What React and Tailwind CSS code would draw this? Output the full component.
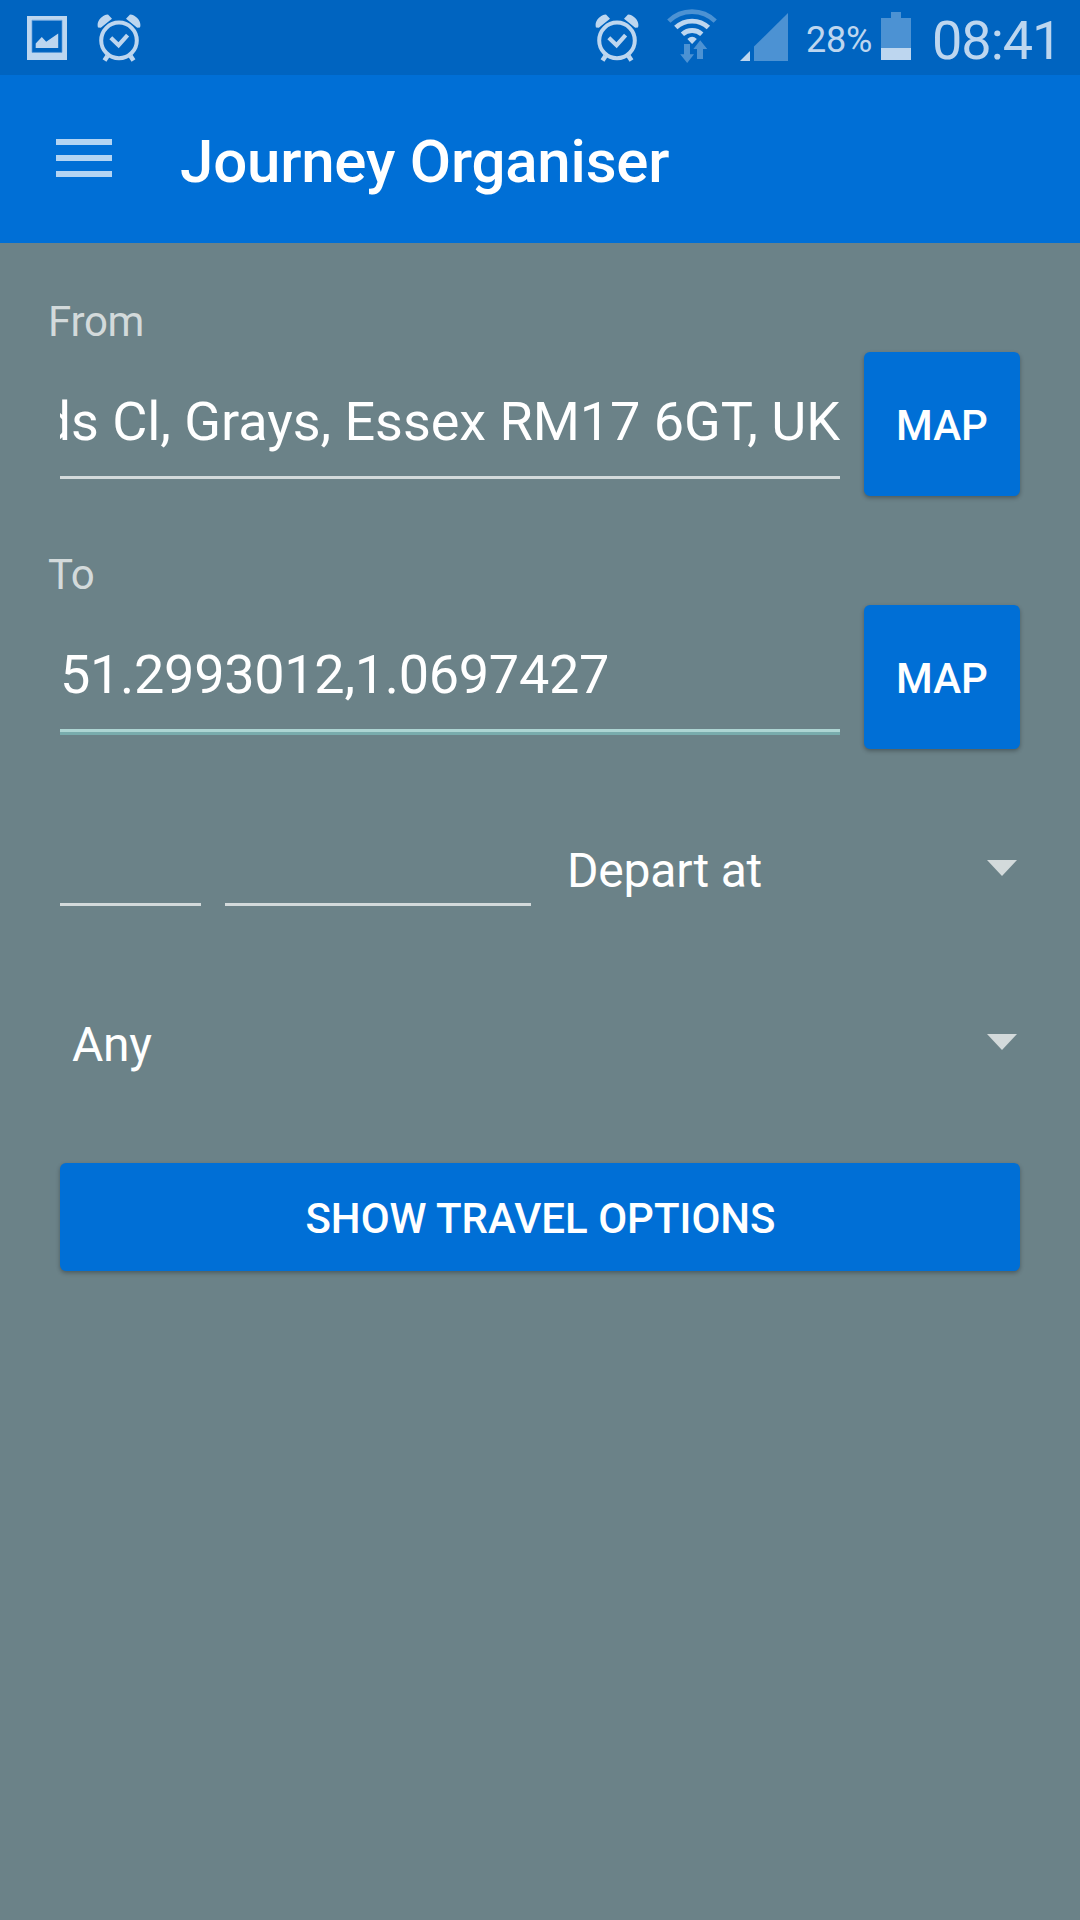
import React from "react";

function AlarmIcon() {
  return (
    <svg width="44" height="48" viewBox="0 0 44 48" fill="none" stroke="#bdd6ef">
      <circle cx="22" cy="26.4" r="17.8" strokeWidth="4" />
      <path d="M13.8 23.8l7.8 7.4 9-10" strokeWidth="4.2" />
      <path d="M10.5 42l-3 4.6M33.5 42l3 4.6" strokeWidth="4.6" />
      <path
        d="M1 13.6C-1 7.8 4.6 1 11 0.6L15 4.8 3.8 13.8ZM43 13.6C45 7.8 39.4 1 33 0.6L29 4.8 40.2 13.8Z"
        fill="#bdd6ef"
        stroke="none"
      />
    </svg>
  );
}

function PictureIcon() {
  return (
    <svg width="40" height="44" viewBox="0 0 40 44">
      <path fillRule="evenodd" d="M0 0h40v44H0zM5 4.5v32h30v-32z" fill="#bdd6ef" />
      <path d="M5 4.2h30v32.2H5z" fill="none" stroke="#5b9cdc" strokeWidth="0.7" />
      <path d="M8.7 32V27.5L14.8 21l4.4 4.7L31.2 17.6V32z" fill="#bdd6ef" />
    </svg>
  );
}

function WifiIcon() {
  return (
    <svg width="50" height="54" viewBox="0 0 50 54" fill="none">
      <path d="M1.8 12.2a33 33 0 0 1 46.4 0" stroke="#4c92d3" strokeWidth="4.6" />
      <path d="M8.8 18.6a23.5 23.5 0 0 1 32.6 0" stroke="#bdd6ef" strokeWidth="4.8" />
      <path d="M15.4 25.2a14.5 14.5 0 0 1 19.4 0" stroke="#bdd6ef" strokeWidth="4.8" />
      <path d="M20.4 30q4.7-4.4 9.4 0l-4.7 5z" fill="#bdd6ef" />
      <path d="M17 35h6v10.2h4L20.2 54 13.2 45.2H17z" fill="#4c92d3" />
      <path d="M30 50h6V40h4.2L33.2 31.2 26.4 40H30z" fill="#4c92d3" />
    </svg>
  );
}

function SignalIcon() {
  return (
    <svg width="48" height="48" viewBox="0 0 48 48">
      <path d="M0 48L10 38v10z" fill="#bdd6ef" />
      <path d="M14 48V33.6L48 0v48z" fill="#4c92d3" />
    </svg>
  );
}

function BatteryIcon() {
  return (
    <svg width="30" height="48" viewBox="0 0 30 48">
      <path d="M10 0h10v6h10v30H0V6h10z" fill="#4c92d3" />
      <path d="M0 36h30v12H0z" fill="#bdd6ef" />
    </svg>
  );
}

function StatusBar() {
  return (
    <div className="flex h-[75px] items-start bg-[#0064c0] pl-[27px] text-[#bdd6ef]">
      <div className="mt-4 shrink-0"><PictureIcon /></div>
      <div className="mt-[14px] ml-[30px] shrink-0"><AlarmIcon /></div>
      <div className="mt-[14px] ml-[454px] shrink-0"><AlarmIcon /></div>
      <div className="mt-[9px] ml-[28px] shrink-0"><WifiIcon /></div>
      <div className="mt-[13px] ml-[23px] shrink-0"><SignalIcon /></div>
      <span className="mt-[20px] ml-[18px] w-[66px] shrink-0 text-[36px] leading-[40px] tracking-[-0.2px] whitespace-nowrap">28%</span>
      <div className="mt-[12px] ml-[9px] shrink-0"><BatteryIcon /></div>
      <span className="mt-[11px] ml-[21px] text-[54px] leading-[60px] tracking-[-1px] whitespace-nowrap">08:41</span>
    </div>
  );
}

function AppBar() {
  return (
    <header className="flex h-[168px] items-center bg-[#006fd6] pl-14">
      <button className="flex w-14 flex-col gap-[10px] pb-[2px]" aria-label="Menu">
        <span className="h-[6px] bg-[#b3d4f3]" />
        <span className="h-[6px] bg-[#b3d4f3]" />
        <span className="h-[6px] bg-[#b3d4f3]" />
      </button>
      <h1 className="mt-[6px] ml-[68px] text-[60px] leading-[70px] font-medium tracking-[-0.2px] text-white">Journey Organiser</h1>
    </header>
  );
}

const buttonClass =
  "rounded-[6px] bg-[#006fd6] pt-[3px] text-[42px] leading-[50px] font-medium text-white shadow-[0_2px_4px_rgba(0,0,0,0.3)]";

function PlaceField({ label, value, focused }) {
  return (
    <section className="h-[253px]">
      <div className="ml-12 h-[55px] text-[42px] leading-[50px] tracking-[-0.3px] text-[#d3dadb]">{label}</div>
      <div className="flex h-36 gap-6 pr-[60px] pl-[60px]">
        <div className="w-[780px]">
          <div className={focused ? "flex h-[124px] overflow-hidden tracking-[-0.3px]" : "flex h-[124px] justify-end overflow-hidden tracking-[-0.04px]"}>
            <span className="shrink-0 pt-[35px] text-[54px] leading-[70px] whitespace-nowrap text-white">{value}</span>
          </div>
          <div className={focused ? "h-[6px] border-t-[3px] border-[#add5d3] bg-[#79acad]" : "h-[3px] bg-[#d3dadb]"} />
        </div>
        <button className={"h-36 w-[156px] " + buttonClass}>MAP</button>
      </div>
    </section>
  );
}

function Caret() {
  return (
    <svg width="30" height="16" viewBox="0 0 30 16">
      <path d="M0 0h30L15 16z" fill="#d3dadb" />
    </svg>
  );
}

export default function App() {
  return (
    <div className="h-[1920px] w-[1080px] overflow-hidden bg-[#6b8288] font-['Roboto',sans-serif]">
      <StatusBar />
      <AppBar />
      <main className="pt-[54px]">
        <PlaceField label="From" value="ds Cl, Grays, Essex RM17 6GT, UK" />
        <PlaceField label="To" value="51.2993012,1.0697427" focused />
        <div className="flex h-[103px] items-end gap-6 pl-[60px]">
          <div className="h-[3px] w-[141px] bg-[#d3dadb]" />
          <div className="h-[3px] w-[306px] bg-[#d3dadb]" />
          <div className="ml-[12px] flex h-[66px] flex-1 items-start justify-between pr-[63px]">
            <span className="pt-px text-[48px] leading-[60px] tracking-[-0.2px] text-white">Depart at</span>
            <div className="mt-5"><Caret /></div>
          </div>
        </div>
        <div className="mt-[108px] flex h-[149px] items-start justify-between pr-[63px] pl-[72px]">
          <span className="pt-px text-[48px] leading-[60px] tracking-[-0.3px] text-white">Any</span>
          <div className="mt-5"><Caret /></div>
        </div>
        <button className={"ml-[60px] block h-[108px] w-[960px] pl-px " + buttonClass}>SHOW TRAVEL OPTIONS</button>
      </main>
    </div>
  );
}
